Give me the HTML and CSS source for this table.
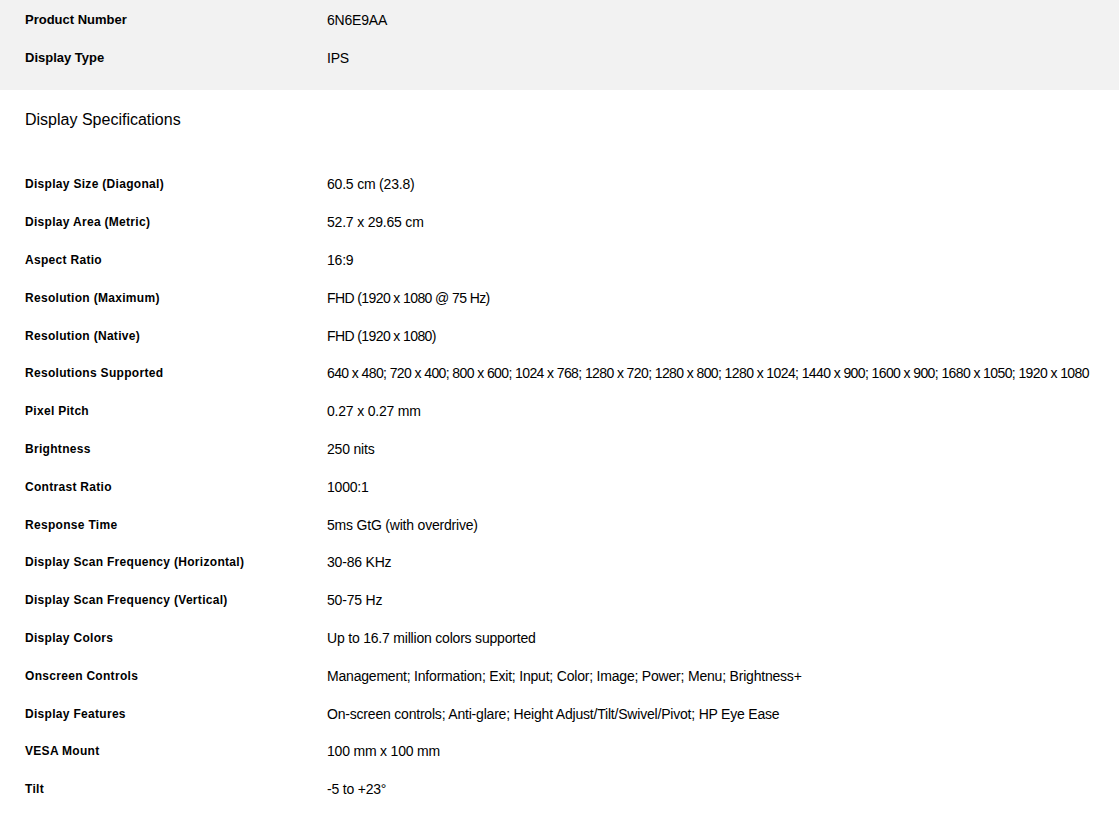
FILE: index.html
```html
<!DOCTYPE html>
<html lang="en">
<head>
  <meta charset="UTF-8" />
  <title>Specifications</title>
  <meta name="viewport" content="width=device-width, initial-scale=1.0" />
  <link rel="stylesheet" href="styles.css">
</head>
<body>
  <section class="summary">
    <div class="spec-row">
      <div class="spec-label">Product Number</div>
      <div class="spec-value">6N6E9AA</div>
    </div>
    <div class="spec-row">
      <div class="spec-label">Display Type</div>
      <div class="spec-value">IPS</div>
    </div>
  </section>

  <section class="specs">
    <h2 class="specs-title">Display Specifications</h2>
    <div class="spec-list">
      <div class="spec-row">
        <div class="spec-label">Display Size (Diagonal)</div>
        <div class="spec-value">60.5 cm (23.8)</div>
      </div>
      <div class="spec-row">
        <div class="spec-label">Display Area (Metric)</div>
        <div class="spec-value">52.7 x 29.65 cm</div>
      </div>
      <div class="spec-row">
        <div class="spec-label">Aspect Ratio</div>
        <div class="spec-value">16:9</div>
      </div>
      <div class="spec-row">
        <div class="spec-label">Resolution (Maximum)</div>
        <div class="spec-value numeric">FHD (1920 x 1080 @ 75 Hz)</div>
      </div>
      <div class="spec-row">
        <div class="spec-label">Resolution (Native)</div>
        <div class="spec-value numeric">FHD (1920 x 1080)</div>
      </div>
      <div class="spec-row">
        <div class="spec-label">Resolutions Supported</div>
        <div class="spec-value numeric">640 x 480; 720 x 400; 800 x 600; 1024 x 768; 1280 x 720; 1280 x 800; 1280 x 1024; 1440 x 900; 1600 x 900; 1680 x 1050; 1920 x 1080</div>
      </div>
      <div class="spec-row">
        <div class="spec-label">Pixel Pitch</div>
        <div class="spec-value">0.27 x 0.27 mm</div>
      </div>
      <div class="spec-row">
        <div class="spec-label">Brightness</div>
        <div class="spec-value">250 nits</div>
      </div>
      <div class="spec-row">
        <div class="spec-label">Contrast Ratio</div>
        <div class="spec-value">1000:1</div>
      </div>
      <div class="spec-row">
        <div class="spec-label">Response Time</div>
        <div class="spec-value">5ms GtG (with overdrive)</div>
      </div>
      <div class="spec-row">
        <div class="spec-label">Display Scan Frequency (Horizontal)</div>
        <div class="spec-value">30-86 KHz</div>
      </div>
      <div class="spec-row">
        <div class="spec-label">Display Scan Frequency (Vertical)</div>
        <div class="spec-value">50-75 Hz</div>
      </div>
      <div class="spec-row">
        <div class="spec-label">Display Colors</div>
        <div class="spec-value">Up to 16.7 million colors supported</div>
      </div>
      <div class="spec-row">
        <div class="spec-label">Onscreen Controls</div>
        <div class="spec-value">Management; Information; Exit; Input; Color; Image; Power; Menu; Brightness+</div>
      </div>
      <div class="spec-row">
        <div class="spec-label">Display Features</div>
        <div class="spec-value">On-screen controls; Anti-glare; Height Adjust/Tilt/Swivel/Pivot; HP Eye Ease</div>
      </div>
      <div class="spec-row">
        <div class="spec-label">VESA Mount</div>
        <div class="spec-value">100 mm x 100 mm</div>
      </div>
      <div class="spec-row">
        <div class="spec-label">Tilt</div>
        <div class="spec-value">-5 to +23°</div>
      </div>
    </div>
  </section>
</body>
</html>
```

FILE: styles.css
```css
body {
  margin: 0;
  padding: 0;
  background-color: #fff;
  color: #000;
  font-family: 'Liberation Sans', Arial, sans-serif;
}

.summary {
  background-color: #f2f2f2;
  padding: 1px 25px 13px;
}

.summary .spec-label {
  font-size: 13px;
  letter-spacing: 0;
}

.specs {
  padding: 0 25px;
}

.specs-title {
  margin: 0;
  padding: 10px 0 0;
  height: 66px;
  line-height: 40px;
  font-size: 16px;
  font-weight: normal;
  letter-spacing: 0;
}

.spec-row {
  display: grid;
  grid-template-columns: 302px 1fr;
  height: 37.8px;
  align-items: center;
}

.spec-label {
  font-size: 12px;
  font-weight: bold;
  letter-spacing: 0.3px;
}

.spec-value {
  font-size: 14px;
  letter-spacing: -0.2px;
  white-space: nowrap;
}

.spec-value.numeric {
  letter-spacing: -0.6px;
}
```
